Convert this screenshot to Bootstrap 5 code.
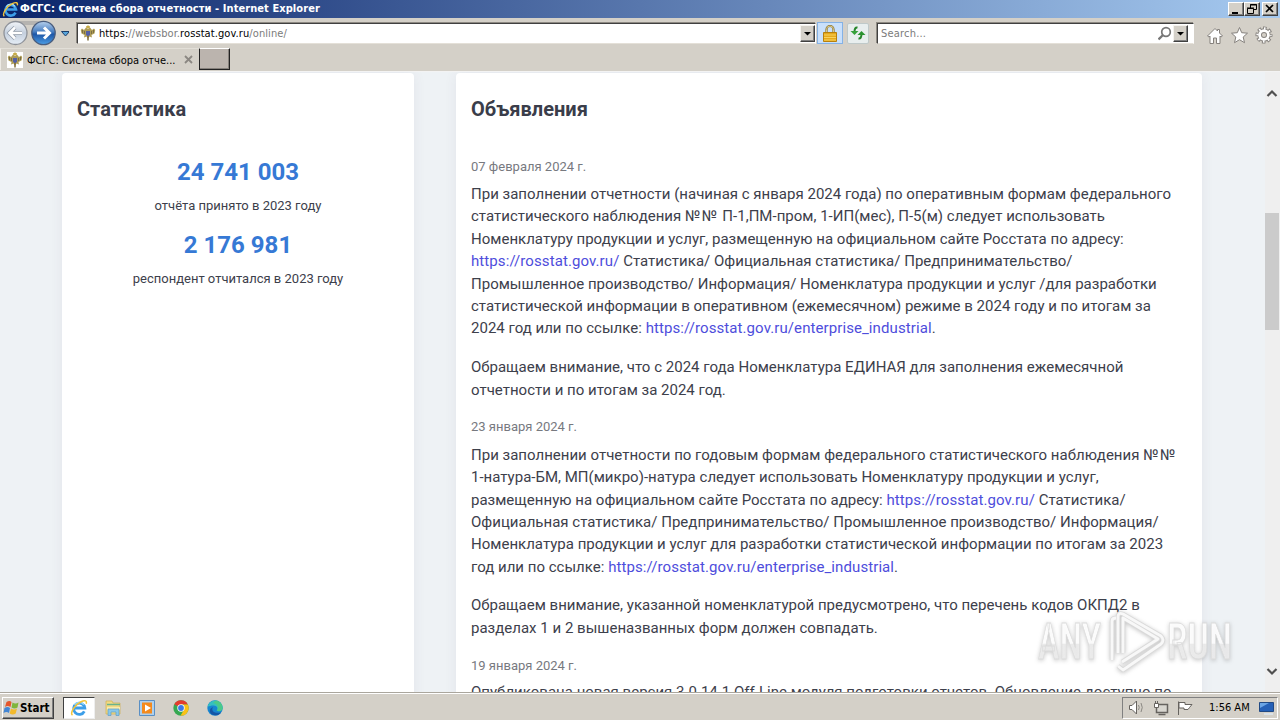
<!DOCTYPE html>
<html lang="ru">
<head>
  <meta charset="UTF-8"/>
  <meta name="viewport" content="width=device-width, initial-scale=1.0"/>
  <title>ФСГС: Система сбора отчетности</title>
  <link rel="stylesheet" href="https://cdn.jsdelivr.net/npm/bootstrap@5.3.0/dist/css/bootstrap.min.css"/>
  <style>
    body {
      width: 1280px;
      height: 720px;
      overflow: hidden;
      background: #d4d0c8;
      color: #000;
      font-family: "DejaVu Sans Condensed", "DejaVu Sans", sans-serif;
      font-stretch: condensed;
      font-size: 11px;
      line-height: 14px;
    }
    svg { display: block; flex: none; }
    .win-title {
      height: 18px;
      padding: 0 2px 0 2px;
      background: linear-gradient(90deg, #0a246a, #a6caf0);
      color: #fff;
      font-weight: bold;
      font-size: 11px;
    }
    .win-title .caption { letter-spacing: .07px; margin-left: 1px; }
    .win-btn {
      width: 16px;
      height: 14px;
      background: #d4d0c8;
      border: 1px solid;
      border-color: #fff #404040 #404040 #fff;
      box-shadow: inset -1px -1px #808080;
    }
    .win-close { margin-left: 2px; }
    .nav-row { height: 30px; padding-left: 2px; }
    .sunken {
      height: 21px;
      background: #fff;
      border: 1px solid;
      border-color: #404040 #fff #e4e0d8 #404040;
      box-shadow: -1px -1px #8d8982;
    }
    .addr-box { width: 739px; margin-left: 8px; padding-left: 2px; }
    .addr-text { margin-left: 3px; padding-top: 2px; letter-spacing: .09px; }
    .find-box { width: 317px; margin-left: 8px; padding-left: 3px; }
    .find-text { padding-top: 2px; letter-spacing: .2px; }
    .grey-text { color: #7b7b7b; }
    .drop-btn {
      width: 15px;
      height: 17px;
      background: #d4d0c8;
      border: 1px solid;
      border-color: #f4f2ee #404040 #404040 #f4f2ee;
      box-shadow: inset -1px -1px #808080;
    }
    .lock-btn { width: 26px; height: 22px; margin-left: 1px; background: #c9e0fb; border: 1px solid #84b2e6; }
    .refresh-btn { width: 22px; height: 21px; margin-left: 4px; background: #e8eeee; border: 1px solid #bfc9c9; border-radius: 2px; }
    .tab-row { height: 23px; }
    .page-tab { width: 199px; height: 22px; padding: 0 6px 0 6px; border-left: 1px solid #eeebe5; border-top: 1px solid #e2dfd8; }
    .tab-name { margin-left: 4px; padding-top: 2px; }
    .fav-bg { width: 16px; height: 16px; background: #fff; }
    .new-tab {
      width: 31px;
      height: 22px;
      background: #bbb4ae;
      border: 1px solid;
      border-color: #fff #222 #222 #222;
      box-shadow: inset -1px -1px #85807b;
    }
    .viewport {
      height: 621px;
      overflow: hidden;
      background: #eef2f5;
      border-top: 1px solid #f3f3f3;
      font-family: Roboto, sans-serif;
      font-stretch: normal;
      font-size: 15px;
      line-height: 22.4px;
    }
    .page-area { width: 1265px; padding: 1px 0 0 62px; gap: 42px; }
    .panel { background: #fff; height: 640px; border-radius: 4px; padding: 0 15px; box-shadow: 0 0 13px rgba(82, 63, 105, .07); color: #3d404b; }
    .panel-stat { width: 352px; }
    .panel-news { width: 746px; }
    .panel-title { font-size: 20px; font-weight: 700; line-height: 24px; margin: 24px 0 35.5px; color: #3a3d4a; }
    .stat-num { font-size: 24px; font-weight: 700; line-height: 30px; color: #3679d5; }
    .stat-label { font-size: 13px; line-height: 20px; margin: 9px 0 14px; }
    .news-date { font-size: 13px; line-height: 20px; color: #77797f; margin-bottom: 6.5px; }
    .news-date:last-of-type { margin-bottom: 5px; }
    .news-text { margin-bottom: 16.3px; white-space: nowrap; letter-spacing: .012px; }
    .news-text a { color: #4e4ddc; text-decoration: none; letter-spacing: .09px; }
    .num-sign { letter-spacing: 1.4px; }
    .scroll-col { width: 15px; background: #efefef; padding: 17px 0 16px; }
    .scroll-thumb { width: 14px; height: 117px; background: #cbcbcb; margin-top: 115px; }
    .task-bar { height: 28px; border-top: 1px solid #aaa69d; box-shadow: inset 0 1px #fff; padding: 2px 2px 0 2px; }
    .start-btn {
      width: 52px;
      height: 22px;
      border: 1px solid;
      border-color: #fff #404040 #404040 #fff;
      box-shadow: inset -1px -1px #808080;
      font-weight: bold;
      font-size: 11.5px;
    }
    .task-item { width: 34px; height: 22px; }
    .task-item.open { width: 32px; margin: 0 1px 0 9px; background: #fff; border: 1px solid; border-color: #404040 #eee #eee #404040; }
    .tray { width: 156px; height: 22px; padding: 0 2px 0 5px; border: 1px solid; border-color: #808080 #fff #fff #808080; }
    .watermark { position: absolute; left: 1030px; top: 604px; filter: drop-shadow(0 1px 2px rgba(90, 90, 90, .35)); }
  </style>
</head>
<body class="d-flex flex-column">
  <svg width="0" height="0" class="position-absolute">
    <defs>
      <symbol id="ie" viewBox="0 0 18 18">
        <path d="M14.300 12.300a5.600 5.600 0 1 1 .5-3.300H5" fill="none" stroke="#3d9ee8" stroke-width="2.800"/>
        <path d="M13.800 5.600A5.600 5.600 0 0 0 4.500 6" fill="none" stroke="#9bdcfa" stroke-width="1.300"/>
        <path d="M2.500 16.200C-.4 14 5 5.500 11 2.700c4-1.900 6-1 5.200 2" fill="none" stroke="#f2c43a" stroke-width="1.500"/>
      </symbol>
      <symbol id="eagle" viewBox="0 0 16 16">
        <path d="M8 4 6 2.500 4 5 2 3.500.8 5l.7 3.500L4.500 10 4 12.500l2.500-1L8 14l1.500-2.500 2.500 1-.5-2.500 3-1.500.7-3.500L14 3.500 12 5l-2-2.500z" fill="#ae9c55"/>
        <path d="M2.500 5v3M4.500 6v3M13.500 5v3M11.500 6v3" stroke="#6d6240" stroke-width=".8"/>
        <path d="M6 2h4M8 .5v3" stroke="#c3a63d" stroke-width="1.500"/>
        <path d="M6 6h4v3.700l-2 1.800-2-1.800z" fill="#5560a5"/>
        <path d="M8 11v4.500" stroke="#806d39" stroke-width="1.500"/>
      </symbol>
    </defs>
  </svg>

  <!-- Title bar -->
  <header class="win-title d-flex align-items-center flex-shrink-0">
    <svg width="17" height="17"><use href="#ie"/></svg>
    <span class="caption me-auto">ФСГС: Система сбора отчетности - Internet Explorer</span>
    <div class="win-btn"><svg width="14" height="12"><path d="M3 9h6v2H3z"/></svg></div>
    <div class="win-btn"><svg width="14" height="12"><path d="M5.500 5V1.500h6v5H9M5 2h7M2.500 5.500h6v5h-6zM2 5h7" fill="none" stroke="#000"/></svg></div>
    <div class="win-btn win-close"><svg width="14" height="12"><path d="m3 2 7 7M10 2 3 9" stroke="#000" stroke-width="1.700"/></svg></div>
  </header>

  <!-- Address row -->
  <div class="nav-row d-flex align-items-center flex-shrink-0">
    <svg width="67" height="30" viewBox="2 18 67 30">
      <defs>
        <linearGradient id="blueBall" x2="0" y2="1"><stop stop-color="#b8d2ee"/><stop offset=".45" stop-color="#477dc0"/><stop offset=".55" stop-color="#1e57a7"/><stop offset="1" stop-color="#4c9ee6"/></linearGradient>
        <linearGradient id="paleBall" x2="0" y2="1"><stop stop-color="#f2f5f9"/><stop offset=".5" stop-color="#c4cfdd"/><stop offset="1" stop-color="#e6eef7"/></linearGradient>
      </defs>
      <path d="M15 21h28l-8 4H24z" fill="#b5b3b0"/>
      <circle cx="15.500" cy="33" r="11.500" fill="url(#paleBall)" stroke="#8e9299" stroke-width="1.300"/>
      <path d="M22 33H10M15 27.500 9.500 33l5.500 5.500" fill="none" stroke="#8e98a6" stroke-width="4"/>
      <path d="M22 33H10M15 27.500 9.500 33l5.500 5.500" fill="none" stroke="#fff" stroke-width="2.600"/>
      <circle cx="43.500" cy="33" r="11.700" fill="url(#blueBall)" stroke="#4a5d7d" stroke-width="1.300"/>
      <path d="M37 33h12M44 27.500l5.500 5.500-5.500 5.500" fill="none" stroke="#fff" stroke-width="3"/>
      <path d="M61.500 31.500h8l-4 4.500z" fill="#58a6dc" stroke="#1d3f6b"/>
    </svg>
    <div class="sunken addr-box d-flex align-items-center">
      <svg width="16" height="16"><use href="#eagle"/></svg>
      <span class="addr-text me-auto">https:<span class="grey-text">//websbor.</span>rosstat.gov.ru<span class="grey-text">/online/</span></span>
      <div class="drop-btn"><svg width="13" height="15"><path d="M3 6h7L6.500 9.500z"/></svg></div>
    </div>
    <div class="lock-btn d-flex align-items-center justify-content-center">
      <svg width="14" height="17" viewBox="0 0 14 17"><path d="M3.500 8V4.500a3.500 3.500 0 0 1 7 0V8" fill="none" stroke="#8b7430" stroke-width="2.200"/><path d="M3.500 8V4.500a3.500 3.500 0 0 1 7 0V8" fill="none" stroke="#d9c98b"/><path d="M.5 7.500h13v9H.5z" fill="#e5a91c" stroke="#b7800d"/><path d="M1 10h12M1 12.500h12M1 15h12" stroke="#f8d35f"/></svg>
    </div>
    <div class="refresh-btn d-flex align-items-center justify-content-center">
      <svg width="16" height="14" viewBox="0 0 16 14"><path d="M7.500 1.500Q4.500 1 4.500 6" fill="none" stroke="#26862a" stroke-width="2"/><path d="M.5 5h8l-4 4z" fill="#35a13a"/><path d="M8.500 12.500q3 .5 3-4.500" fill="none" stroke="#26862a" stroke-width="2"/><path d="M7.500 9h8l-4-4z" fill="#2b9330"/></svg>
    </div>
    <div class="sunken find-box d-flex align-items-center">
      <span class="find-text grey-text me-auto">Search...</span>
      <svg width="15" height="15" viewBox="0 0 15 15"><circle cx="8" cy="6" r="4.300" fill="none" stroke="#777" stroke-width="1.700"/><path d="m5 9-4.500 4.500" stroke="#777" stroke-width="2.300"/></svg>
      <div class="drop-btn" style="margin-right:5px"><svg width="13" height="15"><path d="M3 6h7L6.500 9.500z"/></svg></div>
    </div>
    <svg width="70" height="22" viewBox="0 0 70 22" style="margin:3px 0 0 12px" fill="#fff" stroke="#85817d">
      <path d="m1.500 12 7.500-7.500 2.500 2.500V5.500h2V9l3 3-1.500 1-1-1v7.500h-3.500V14h-3v5.500H4V12l-1 1z"/>
      <path d="m33.500 3.500 2.200 5.200 5.800.5-4.300 3.800 1.300 5.700-5-3-5 3 1.300-5.700-4.300-3.800 5.800-.5z"/>
      <circle cx="58" cy="11" r="6.500" fill="none" stroke-width="4" stroke-dasharray="3.200 1.905" stroke-dashoffset="1.600"/>
      <circle cx="58" cy="11" r="4.400" fill="none" stroke-width="4.600"/>
      <circle cx="58" cy="11" r="6.500" fill="none" stroke="#fff" stroke-width="2.300" stroke-dasharray="1.600 3.505" stroke-dashoffset=".8"/>
      <circle cx="58" cy="11" r="4.400" fill="none" stroke="#fff" stroke-width="2.800"/>
    </svg>
  </div>

  <!-- Tabs -->
  <div class="tab-row d-flex flex-shrink-0">
    <div class="page-tab d-flex align-items-center">
      <div class="fav-bg"><svg width="16" height="16"><use href="#eagle"/></svg></div>
      <span class="tab-name">ФСГС: Система сбора отче...</span>
      <svg width="9" height="9" class="ms-auto"><path d="m1 1 7 7M8 1 1 8" stroke="#8b8782" stroke-width="1.800"/></svg>
    </div>
    <div class="new-tab"></div>
  </div>

  <!-- Page -->
  <main class="viewport d-flex flex-shrink-0">
    <div class="page-area d-flex">
      <section class="panel panel-stat">
        <h2 class="panel-title">Статистика</h2>
        <div class="text-center">
          <div class="stat-num">24 741 003</div>
          <div class="stat-label">отчёта принято в 2023 году</div>
          <div class="stat-num">2 176 981</div>
          <div class="stat-label">респондент отчитался в 2023 году</div>
        </div>
      </section>
      <section class="panel panel-news">
        <h2 class="panel-title">Объявления</h2>
        <div class="news-date">07 февраля 2024 г.</div>
        <p class="news-text">При заполнении отчетности (начиная с января 2024 года) по оперативным формам федерального<br>
          статистического наблюдения <span class="num-sign">№№</span> П-1,ПМ-пром, 1-ИП(мес), П-5(м) следует использовать<br>
          Номенклатуру продукции и услуг, размещенную на официальном сайте Росстата по адресу:<br>
          <a href="#">https://rosstat.gov.ru/</a> Статистика/ Официальная статистика/ Предпринимательство/<br>
          Промышленное производство/ Информация/ Номенклатура продукции и услуг /для разработки<br>
          статистической информации в оперативном (ежемесячном) режиме в 2024 году и по итогам за<br>
          2024 год или по ссылке: <a href="#">https://rosstat.gov.ru/enterprise_industrial</a>.</p>
        <p class="news-text">Обращаем внимание, что с 2024 года Номенклатура ЕДИНАЯ для заполнения ежемесячной<br>
          отчетности и по итогам за 2024 год.</p>
        <div class="news-date">23 января 2024 г.</div>
        <p class="news-text">При заполнении отчетности по годовым формам федерального статистического наблюдения <span class="num-sign">№№</span><br>
          1-натура-БМ, МП(микро)-натура следует использовать Номенклатуру продукции и услуг,<br>
          размещенную на официальном сайте Росстата по адресу: <a href="#">https://rosstat.gov.ru/</a> Статистика/<br>
          Официальная статистика/ Предпринимательство/ Промышленное производство/ Информация/<br>
          Номенклатура продукции и услуг для разработки статистической информации по итогам за 2023<br>
          год или по ссылке: <a href="#">https://rosstat.gov.ru/enterprise_industrial</a>.</p>
        <p class="news-text">Обращаем внимание, указанной номенклатурой предусмотрено, что перечень кодов ОКПД2 в<br>
          разделах 1 и 2 вышеназванных форм должен совпадать.</p>
        <div class="news-date">19 января 2024 г.</div>
        <p class="news-text">Опубликована новая версия 3.0.14.1 Off-Line модуля подготовки отчетов. Обновление доступно по</p>
      </section>
    </div>
    <div class="scroll-col d-flex flex-column">
      <svg width="15" height="9" class="flex-shrink-0"><path d="M2.500 7 7 2.500 11.500 7" fill="none" stroke="#505050" stroke-width="2.200"/></svg>
      <div class="scroll-thumb"></div>
      <svg width="15" height="9" class="mt-auto"><path d="M2.500 2 7 6.500 11.500 2" fill="none" stroke="#505050" stroke-width="2.200"/></svg>
    </div>
  </main>

  <!-- Watermark over the page -->
  <svg class="watermark" width="215" height="74" viewBox="1030 604 215 74">
    <defs>
      <linearGradient id="wmFill" x2="0" y2="1"><stop offset=".52" stop-color="#fff"/><stop offset=".54" stop-color="#ececec"/></linearGradient>
    </defs>
    <g font-family="Roboto, sans-serif" font-size="50" font-weight="500" fill="url(#wmFill)" fill-opacity=".9" stroke="#dcdcdc" stroke-width=".8">
      <text x="1038" y="659" textLength="63" lengthAdjust="spacingAndGlyphs">ANY</text>
      <text x="1167" y="659" textLength="65" lengthAdjust="spacingAndGlyphs">RUN</text>
    </g>
    <g fill="none" stroke-linejoin="round">
      <path d="M1112 660v-39q0-3 4-3M1123 653v-35l35 21-36 23M1118 666l5 4 38-26q4-4 0-8l-38-22q-5-2-5 3v36" stroke="#dadada" stroke-width="4.500"/>
      <path d="M1112 660v-39q0-3 4-3M1123 653v-35l35 21-36 23M1118 666l5 4 38-26q4-4 0-8l-38-22q-5-2-5 3v36" stroke="#f8f8f8" stroke-width="2.800"/>
    </g>
  </svg>

  <!-- Taskbar -->
  <footer class="task-bar d-flex align-items-center flex-shrink-0">
    <div class="start-btn d-flex align-items-center">
      <svg width="17" height="16" viewBox="0 0 16 16"><path d="M3 2q3-2 5 0L7 7Q4 5 1.500 7z" fill="#e5562b"/><path d="M9 2.500q3 2 6 0L14 7.500q-3 2-6 0z" fill="#7fb53c"/><path d="M1 8q3-2 5.500 0l-1 5Q3 11 0 13z" fill="#4386d4"/><path d="M7.500 8.500q3 2 6 0l-1.300 5q-3 2-6 0z" fill="#f2b92b"/></svg>
      <span>Start</span>
    </div>
    <div class="task-item open d-flex align-items-center justify-content-center"><svg width="18" height="18"><use href="#ie"/></svg></div>
    <div class="task-item d-flex align-items-center justify-content-center">
      <svg width="17" height="16" viewBox="0 0 17 16"><path d="M1 1h6l1 2h7v11H1z" fill="#f2da83" stroke="#cfaf55" stroke-width=".7"/><path d="M2 4.500h13" stroke="#6ab38e" stroke-width="1.500"/><path d="M2 7h13v3H2z" fill="#f9ecad"/><path d="M3 15.500V9h11v6.500h-3V12H6v3.500z" fill="#8ac8e9" stroke="#5e9ec7" stroke-width=".7"/></svg>
    </div>
    <div class="task-item d-flex align-items-center justify-content-center">
      <svg width="16" height="16" viewBox="0 0 16 16"><path d="M.5.5h15v15H.5z" fill="#aed0ed" stroke="#5a8fc4"/><path d="M3 2.500h10v11H3z" fill="#f48a1c"/><path d="m6 4.500 6 3.500-6 3.500z" fill="#fff"/></svg>
    </div>
    <div class="task-item d-flex align-items-center justify-content-center">
      <svg width="16" height="16" viewBox="0 0 16 16"><circle cx="8" cy="8" r="7.700" fill="#36a852"/><path d="M8 8 1.300 4.200A7.700 7.700 0 0 1 14.800 4.500H8z" fill="#e33b2e"/><path d="M8 4.500h6.800A7.700 7.700 0 0 1 7.500 15.700L11 9.700z" fill="#fbc116"/><circle cx="8" cy="8" r="3.700" fill="#fff"/><circle cx="8" cy="8" r="2.900" fill="#3c78e6"/></svg>
    </div>
    <div class="task-item d-flex align-items-center justify-content-center">
      <svg width="16" height="16" viewBox="0 0 16 16"><circle cx="8" cy="8" r="7.700" fill="#1785d0"/><path d="M.4 7A7.700 7.700 0 0 1 15.700 8c0 3-4 4-6 2.500 2-2 0-5-3-5C4 5.500 2 6 .4 7z" fill="#35bfc0"/><path d="M9 .5A7.700 7.700 0 0 1 15.700 8c0 3-4 4-6 2.500C12 8 11 4 6 3z" fill="#4bc98a"/><path d="M6 7c-2 3 0 7 8 5.500-2 3-6 3.500-9 2-3-2-3-6 1-7.500z" fill="#1556a5"/></svg>
    </div>
    <div class="tray ms-auto d-flex align-items-center">
      <svg width="72" height="18" viewBox="0 0 72 18" fill="#fff" stroke="#66635f">
        <path d="M1.500 6.500H4L8.500 2v13L4 10.500H1.500z"/>
        <path d="M10.500 6q1.500 2.500 0 5M13 4q2.500 4.500 0 9" fill="none" stroke="#8b8883"/>
        <path d="M28.500 5.500h11v8h-11z" fill="#d8d6d0" stroke-width="1.500"/><path d="M30.500 15.500h7" stroke-width="1.500"/><path d="M26.500 4.500h4v4h-4zM27.500 2v2.500M29.500 2v2.500M28.500 8.500v5"/>
        <path d="M50.500 16V2.500M51 3.500h6v2h7l-2.500 3-1.500 2h-4V9h-5z"/>
      </svg>
      <span style="margin-left:9px">1:56 AM</span>
      <svg width="16" height="14" viewBox="0 0 16 14" class="ms-auto"><path d="M.5 1.500h14v9H.5z" fill="#2661b7" stroke="#224a84"/><path d="m1 2 9 0-9 5z" fill="#6ba5e5"/><path d="M5 13h9" stroke="#dee8f2" stroke-width="1.500"/></svg>
    </div>
  </footer>

  <script src="https://cdn.jsdelivr.net/npm/bootstrap@5.3.0/dist/js/bootstrap.bundle.min.js"></script>
</body>
</html>
